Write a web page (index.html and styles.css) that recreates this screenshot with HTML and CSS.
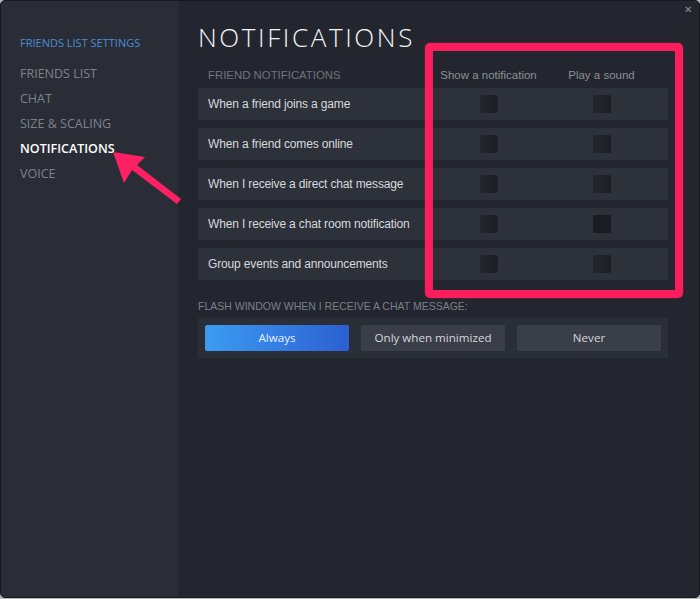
FILE: index.html
```html
<!DOCTYPE html>
<html lang="en">
<head>
	<meta charset="UTF-8">
	<title>Friends List Settings</title>
	<link rel="stylesheet" href="styles.css">
</head>
<body>
	<div class="window">
		<aside class="sidebar">
			<div class="side-title">FRIENDS LIST SETTINGS</div>
			<a class="side-item" href="javascript:;">FRIENDS LIST</a>
			<a class="side-item" href="javascript:;">CHAT</a>
			<a class="side-item" href="javascript:;">SIZE &amp; SCALING</a>
			<a class="side-item on" href="javascript:;">NOTIFICATIONS</a>
			<a class="side-item" href="javascript:;">VOICE</a>
		</aside>

		<main class="content">
			<h1 class="title">NOTIFICATIONS</h1>

			<div class="table">
				<div class="row head">
					<span class="section">FRIEND NOTIFICATIONS</span>
					<span class="col">Show a notification</span>
					<span class="col">Play a sound</span>
				</div>
				<div class="row">
					<span class="label">When a friend joins a game</span>
					<span class="cell"><span class="check"></span></span>
					<span class="cell"><span class="check"></span></span>
				</div>
				<div class="row">
					<span class="label">When a friend comes online</span>
					<span class="cell"><span class="check"></span></span>
					<span class="cell"><span class="check"></span></span>
				</div>
				<div class="row">
					<span class="label">When I receive a direct chat message</span>
					<span class="cell"><span class="check"></span></span>
					<span class="cell"><span class="check"></span></span>
				</div>
				<div class="row">
					<span class="label">When I receive a chat room notification</span>
					<span class="cell"><span class="check"></span></span>
					<span class="cell"><span class="check dark"></span></span>
				</div>
				<div class="row">
					<span class="label">Group events and announcements</span>
					<span class="cell"><span class="check"></span></span>
					<span class="cell"><span class="check"></span></span>
				</div>
			</div>

			<div class="flash-label">FLASH WINDOW WHEN I RECEIVE A CHAT MESSAGE:</div>
			<div class="segmented">
				<a class="seg active" href="javascript:;">Always</a>
				<a class="seg" href="javascript:;">Only when minimized</a>
				<a class="seg" href="javascript:;">Never</a>
			</div>
		</main>

		<a class="close" href="javascript:;">&#10005;</a>

		<!-- annotation overlays -->
		<div class="highlight"></div>
		<svg class="arrow" width="700" height="599" viewBox="0 0 700 599">
			<polygon points="113,152 145,157 137,165 181,199 177,204 132,170 124,183" fill="#fb2163"/>
		</svg>
	</div>
</body>
</html>
```

FILE: styles.css
```css
* {
	padding: 0;
	margin: 0;
	box-sizing: border-box;
}

body {
	background: #b8babd;
	font-family: "Liberation Sans", Arial, sans-serif;
}

.window {
	position: relative;
	width: 700px;
	height: 598px;
	display: flex;
	background: #23262e;
	border: 1px solid #17191e;
	border-radius: 5px;
	overflow: hidden;
}

/* left column */
.sidebar {
	width: 177px;
	flex: none;
	background: #2a2d35;
	display: flex;
	flex-direction: column;
	padding: 34px 0 0 19px;
	font-family: "Open Sans", "Noto Sans", sans-serif;
}

.side-title {
	font-size: 11px;
	line-height: 16px;
	color: #4a8ed8;
	margin-bottom: 10px;
}

.side-item {
	font-size: 12.5px;
	line-height: 25px;
	color: #7e838b;
	text-decoration: none;
}

.side-item.on {
	color: #ffffff;
	font-weight: 600;
}

/* main area */
.content {
	flex: 1;
	padding: 20px 31px 0 20px;
}

.title {
	font-family: "Open Sans", "Noto Sans", sans-serif;
	font-weight: 300;
	font-size: 26px;
	line-height: 32px;
	letter-spacing: 2.6px;
	color: #f2f3f5;
	margin-bottom: 11px;
}

.table {
	display: flex;
	flex-direction: column;
	gap: 8px;
}

.row {
	display: grid;
	grid-template-columns: 1fr 113px 113px;
	align-items: center;
	height: 32px;
	padding: 0 10px;
	background: #2d3139;
}

.row.head {
	height: 22px;
	background: none;
	margin-bottom: -6px;
}

.section {
	font-size: 11.4px;
	color: #6f747c;
}

.col {
	font-size: 11.5px;
	color: #8b9098;
	text-align: center;
}

.label {
	font-size: 12px;
	letter-spacing: -0.15px;
	color: #d7d9dd;
}

.cell {
	display: flex;
	justify-content: center;
}

.check {
	width: 18px;
	height: 18px;
	border-radius: 2px;
	background: linear-gradient(90deg, #22252b, #1d1f25);
}

.check.dark {
	background: #1a1c21;
}

.flash-label {
	margin-top: 19px;
	font-size: 10.5px;
	color: #7b8088;
	line-height: 14px;
}

.segmented {
	margin-top: 5px;
	display: flex;
	gap: 12px;
	padding: 7px;
	background: #2a2e36;
}

.seg {
	flex: 1;
	height: 26px;
	line-height: 26px;
	text-align: center;
	font-family: "Open Sans", "Noto Sans", sans-serif;
	font-size: 11.6px;
	color: #d5d7db;
	text-decoration: none;
	background: #3a3e48;
	border-radius: 2px;
}

.seg.active {
	color: #e8f1ff;
	background: linear-gradient(90deg, #3c9cf2, #2c5fd2);
}

.close {
	position: absolute;
	top: 3px;
	right: 7px;
	font-size: 10px;
	color: #8d9198;
	text-decoration: none;
}

/* overlays drawn on top of the screenshot */
.highlight {
	position: absolute;
	left: 424px;
	top: 42px;
	width: 258px;
	height: 255px;
	border: 8px solid #fc1d5c;
	border-radius: 5px;
	box-shadow: 0 0 2px rgba(252, 29, 92, 0.6);
}

.arrow {
	position: absolute;
	left: -1px;
	top: -1px;
}
```
